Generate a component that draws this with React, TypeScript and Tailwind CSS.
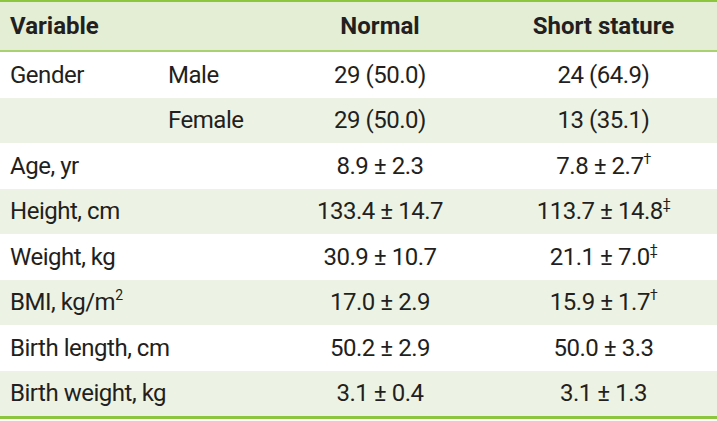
import React from "react";

type Row = {
  label: React.ReactNode;
  sub?: string;
  normal: React.ReactNode;
  short: React.ReactNode;
  shaded: boolean;
};

const Mark = ({ children }: { children: React.ReactNode }) => (
  <sup className="text-[14px] relative -top-[0.7em] align-baseline">{children}</sup>
);

const pm = (a: string, b: string, mark?: string) => (
  <>
    {a} ± {b}
    {mark && <Mark>{mark}</Mark>}
  </>
);

const rows: Row[] = [
  { label: "Gender", sub: "Male", normal: "29 (50.0)", short: "24 (64.9)", shaded: false },
  { label: "", sub: "Female", normal: "29 (50.0)", short: "13 (35.1)", shaded: true },
  { label: "Age, yr", normal: pm("8.9", "2.3"), short: pm("7.8", "2.7", "†"), shaded: false },
  { label: "Height, cm", normal: pm("133.4", "14.7"), short: pm("113.7", "14.8", "‡"), shaded: true },
  { label: "Weight, kg", normal: pm("30.9", "10.7"), short: pm("21.1", "7.0", "‡"), shaded: false },
  {
    label: (
      <>
        BMI, kg/m<Mark>2</Mark>
      </>
    ),
    normal: pm("17.0", "2.9"),
    short: pm("15.9", "1.7", "†"),
    shaded: true,
  },
  { label: "Birth length, cm", normal: pm("50.2", "2.9"), short: pm("50.0", "3.3"), shaded: false },
  { label: "Birth weight, kg", normal: pm("3.1", "0.4"), short: pm("3.1", "1.3"), shaded: true },
];

export default function App() {
  return (
    <div className="w-[717px] h-[421px] bg-white text-[#231f20] overflow-hidden font-['Roboto',sans-serif]">
      <div className="border-t-2 border-[#8cc63f]">
        <div className="grid grid-cols-[270px_220px_227px] h-[50px] items-center bg-[#e4eed5] border-b-2 border-[#a9d170] text-[24px] font-bold">
          <div className="pl-[10px]">Variable</div>
          <div className="text-center">Normal</div>
          <div className="text-center">Short stature</div>
        </div>
        {rows.map((r, i) => (
          <div
            key={i}
            className={`grid grid-cols-[158px_112px_220px_227px] h-[45.5px] items-center text-[24px] ${
              r.shaded ? "bg-[#edf3e4]" : "bg-white"
            }`}
          >
            <div
              className={`pl-[10px] whitespace-nowrap tracking-[-0.02em] ${
                r.sub === undefined ? "col-span-2" : ""
              }`}
            >
              {r.label}
            </div>
            {r.sub !== undefined && <div className="pl-[10px] tracking-[-0.02em]">{r.sub}</div>}
            <div className="text-center whitespace-nowrap tracking-[-0.02em]">{r.normal}</div>
            <div className="text-center whitespace-nowrap tracking-[-0.02em]">{r.short}</div>
          </div>
        ))}
        <div className="border-t-[3px] border-[#8cc63f]" />
      </div>
    </div>
  );
}
